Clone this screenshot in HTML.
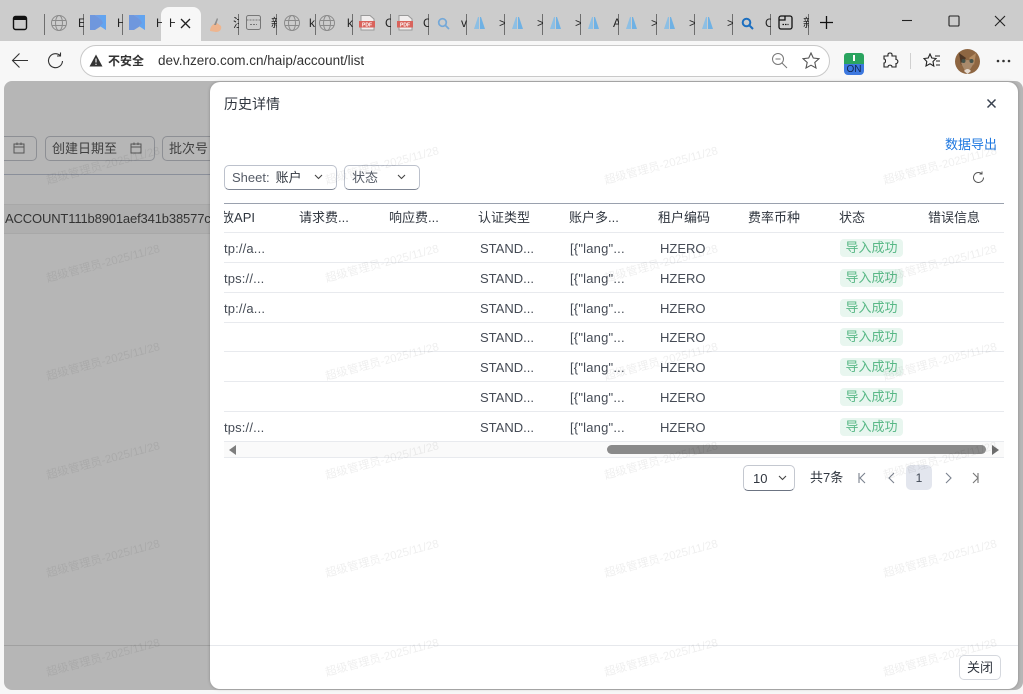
<!DOCTYPE html>
<html lang="zh-CN"><head><meta charset="utf-8"><title>历史详情</title>
<style>
html,body{margin:0;padding:0;width:1023px;height:694px;overflow:hidden;background:#f7f7f7}
body{position:relative;font-family:"Liberation Sans","Noto Sans CJK SC",sans-serif;font-size:13px;color:#30363f}
div,span.a,svg{position:absolute}
.t{white-space:nowrap;line-height:18px}
.sep{top:14px;width:1px;height:21px;background:#6e6e6e}
.cl{top:14px;font-size:12px;width:6px;overflow:hidden;height:18px;line-height:18px;color:#222;white-space:nowrap}
.btn{border:1px solid #bcc1cc;border-bottom-color:#7f8694;border-radius:5px;box-sizing:border-box}
.hl{left:224px;width:780px;height:1px;background:#e8eaee}
.h{top:209px;line-height:18px;white-space:nowrap;color:#30363f}
.c{line-height:18px;white-space:nowrap;color:#454b55;margin-top:1px}
.u{letter-spacing:.15px}
.l{letter-spacing:.2px}
.tag{left:840px;width:63px;height:18px;line-height:18px;background:#e8f6ef;border-radius:4px;color:#58b886;text-align:center}
</style></head><body>
<div style="left:0;top:0;width:1023px;height:41px;background:#cccccc"></div>
<div style="left:161px;top:7px;width:40px;height:34px;background:#f7f7f7;border-radius:8px 8px 0 0"></div>
<svg style="left:12px;top:15px" width="16" height="16" viewBox="0 0 16 16"><rect x="1.500" y="1.500" width="13" height="13" rx="2" fill="none" stroke="#111" stroke-width="1.400"/><rect x="1.500" y="1.500" width="13" height="3.500" fill="#111"/></svg>
<div class="sep" style="left:44px"></div><div class="sep" style="left:83px"></div><div class="sep" style="left:122px"></div><div class="sep" style="left:238px"></div><div class="sep" style="left:276px"></div><div class="sep" style="left:315px"></div><div class="sep" style="left:352px"></div><div class="sep" style="left:390px"></div><div class="sep" style="left:428px"></div><div class="sep" style="left:466px"></div><div class="sep" style="left:504px"></div><div class="sep" style="left:542px"></div><div class="sep" style="left:580px"></div><div class="sep" style="left:618px"></div><div class="sep" style="left:656px"></div><div class="sep" style="left:694px"></div><div class="sep" style="left:732px"></div><div class="sep" style="left:770px"></div><div class="sep" style="left:808px"></div>
<svg style="left:50px;top:14px" width="18" height="18" viewBox="0 0 18 18" fill="none" stroke="#8b8b8b"><circle cx="9" cy="9" r="7.500"/><ellipse cx="9" cy="9" rx="3.500" ry="7.500"/><path d="M2 6.500H16M2 11.500H16"/></svg>
<svg style="left:318px;top:14px" width="18" height="18" viewBox="0 0 18 18" fill="none" stroke="#8b8b8b"><circle cx="9" cy="9" r="7.500"/><ellipse cx="9" cy="9" rx="3.500" ry="7.500"/><path d="M2 6.500H16M2 11.500H16"/></svg>
<svg style="left:283px;top:14px" width="18" height="18" viewBox="0 0 18 18" fill="none" stroke="#8b8b8b"><circle cx="9" cy="9" r="7.500"/><ellipse cx="9" cy="9" rx="3.500" ry="7.500"/><path d="M2 6.500H16M2 11.500H16"/></svg>
<svg style="left:90px;top:15px" width="17" height="16" viewBox="0 0 17 16"><path d="M0 0H5L16 8 5 15H0Z" fill="#6f97dd"/><path d="M5 0H16V15L10 11 15 8Z" fill="#6f9fe8"/><path d="M9 0H16V15L10 11 13 8Z" fill="#62a4f0"/></svg>
<svg style="left:129px;top:15px" width="17" height="16" viewBox="0 0 17 16"><path d="M0 0H5L16 8 5 15H0Z" fill="#6f97dd"/><path d="M5 0H16V15L10 11 15 8Z" fill="#6f9fe8"/><path d="M9 0H16V15L10 11 13 8Z" fill="#62a4f0"/></svg>
<div class="cl" style="left:78px">E</div><div class="cl" style="left:117px">H</div><div class="cl" style="left:156px">H</div><div class="cl" style="left:169px">H</div><div class="cl" style="left:233px">注</div><div class="cl" style="left:271px">新</div><div class="cl" style="left:309px">k</div><div class="cl" style="left:347px">k</div><div class="cl" style="left:385px">C</div><div class="cl" style="left:423px">C</div><div class="cl" style="left:461px">v</div><div class="cl" style="left:499px">&gt;</div><div class="cl" style="left:537px">&gt;</div><div class="cl" style="left:575px">&gt;</div><div class="cl" style="left:613px">A</div><div class="cl" style="left:651px">&gt;</div><div class="cl" style="left:689px">&gt;</div><div class="cl" style="left:727px">&gt;</div><div class="cl" style="left:765px">C</div><div class="cl" style="left:803px">新</div>
<svg style="left:180px;top:18px" width="11" height="11" viewBox="0 0 11 11"><path d="M1 1L10 10M10 1L1 10" stroke="#222" stroke-width="1.300"/></svg>
<svg style="left:209px;top:17px" width="14" height="15" viewBox="0 0 14 15"><path d="M1 14C1 9 5 6 8 6L12 9C13 12 11 15 7 15Z" fill="#eeb58f"/><path d="M5 8L8 1 9 2 7 8Z" fill="#8d8d8d"/></svg>
<svg style="left:246px;top:15px" width="15" height="15" viewBox="0 0 15 15" fill="none" stroke="#777"><rect x=".5" y=".5" width="14" height="14" rx="2"/><path d="M.5 5H14.500M4 9.500H11" stroke-dasharray="2 1"/></svg>
<svg style="left:359px;top:15px" width="16" height="16" viewBox="0 0 16 16"><path d="M2 .5H11L15 4V15H2Z" fill="#f1eeee" stroke="#999"/><rect x="0" y="6" width="16" height="6.500" fill="#d9635c"/><text x="8" y="11.300" font-size="5" font-weight="bold" fill="#fff" text-anchor="middle" font-family="Liberation Sans">PDF</text></svg>
<svg style="left:397px;top:15px" width="16" height="16" viewBox="0 0 16 16"><path d="M2 .5H11L15 4V15H2Z" fill="#f1eeee" stroke="#999"/><rect x="0" y="6" width="16" height="6.500" fill="#d9635c"/><text x="8" y="11.300" font-size="5" font-weight="bold" fill="#fff" text-anchor="middle" font-family="Liberation Sans">PDF</text></svg>
<svg style="left:437px;top:17px" width="13" height="13" viewBox="0 0 13 13" fill="none" stroke="#74a8d8" stroke-width="1.700"><circle cx="5.500" cy="5.500" r="3.800"/><path d="M8.500 8.500L12 12"/></svg>
<svg style="left:474px;top:16px" width="11" height="14" viewBox="0 0 11 14"><path d="M0 13L4 1H5L5 13Z" fill="#8dbfe4"/><path d="M6 1H7L11 13H6Z" fill="#6fb1e4"/></svg>
<svg style="left:512px;top:16px" width="11" height="14" viewBox="0 0 11 14"><path d="M0 13L4 1H5L5 13Z" fill="#8dbfe4"/><path d="M6 1H7L11 13H6Z" fill="#6fb1e4"/></svg>
<svg style="left:550px;top:16px" width="11" height="14" viewBox="0 0 11 14"><path d="M0 13L4 1H5L5 13Z" fill="#8dbfe4"/><path d="M6 1H7L11 13H6Z" fill="#6fb1e4"/></svg>
<svg style="left:588px;top:16px" width="11" height="14" viewBox="0 0 11 14"><path d="M0 13L4 1H5L5 13Z" fill="#8dbfe4"/><path d="M6 1H7L11 13H6Z" fill="#6fb1e4"/></svg>
<svg style="left:626px;top:16px" width="11" height="14" viewBox="0 0 11 14"><path d="M0 13L4 1H5L5 13Z" fill="#8dbfe4"/><path d="M6 1H7L11 13H6Z" fill="#6fb1e4"/></svg>
<svg style="left:664px;top:16px" width="11" height="14" viewBox="0 0 11 14"><path d="M0 13L4 1H5L5 13Z" fill="#8dbfe4"/><path d="M6 1H7L11 13H6Z" fill="#6fb1e4"/></svg>
<svg style="left:702px;top:16px" width="11" height="14" viewBox="0 0 11 14"><path d="M0 13L4 1H5L5 13Z" fill="#8dbfe4"/><path d="M6 1H7L11 13H6Z" fill="#6fb1e4"/></svg>
<svg style="left:741px;top:17px" width="13" height="13" viewBox="0 0 13 13" fill="none" stroke="#1c6fc0" stroke-width="2"><circle cx="5.500" cy="5.500" r="3.800"/><path d="M8.500 8.500L12 12"/></svg>
<svg style="left:778px;top:15px" width="16" height="15" viewBox="0 0 16 15" fill="none" stroke="#111" stroke-width="1.300"><rect x="1" y="1" width="13" height="13" rx="2"/><path d="M1 5H7V1"/><path d="M4.500 9.500H10.500" stroke-dasharray="1.500 1"/></svg>
<svg style="left:819px;top:15px" width="15" height="15" viewBox="0 0 15 15"><path d="M7.500 1V14M1 7.500H14" stroke="#111" stroke-width="1.300"/></svg>
<svg style="left:902px;top:15px" width="122" height="16" viewBox="0 0 122 16" fill="none" stroke="#222" stroke-width="1.100"><path d="M0 5.500H10"/><rect x="47" y="1" width="10" height="10" rx="1"/><path d="M93 1L103 11M103 1L93 11"/></svg>
<div style="left:0;top:41px;width:1023px;height:40px;background:#f7f7f7"></div>
<svg style="left:11px;top:52px" width="18" height="17" viewBox="0 0 18 17" fill="none" stroke="#333" stroke-width="1.100"><path d="M17 8.500H1.500M8.500 1.500L1.500 8.500 8.500 15.500"/></svg>
<svg style="left:47px;top:52px" width="18" height="18" viewBox="0 0 18 18" fill="none" stroke="#333" stroke-width="1.100"><path d="M15.500 9A7 7 0 1 1 13 3.300"/><path d="M13.500 .5V4H10"/></svg>
<div style="left:80px;top:45px;width:750px;height:32px;box-sizing:border-box;background:#fff;border:1px solid #c9c9c9;border-radius:16px"></div>
<svg style="left:89px;top:54px" width="14" height="13" viewBox="0 0 14 13"><path d="M7 .5L13.500 12.500H.5Z" fill="#333"/><path d="M7 4.500V8.500M7 9.700V11" stroke="#fff" stroke-width="1.100"/></svg>
<div class="t" style="left:108px;top:52px;font-size:12px;font-weight:bold;color:#333">不安全</div>
<div class="t" style="left:158px;top:52px;font-size:13.500px;color:#333">dev.hzero.com.cn/haip/account/list</div>
<svg style="left:771px;top:52px" width="17" height="17" viewBox="0 0 17 17" fill="none" stroke="#777" stroke-width="1"><circle cx="7" cy="7" r="5.500"/><path d="M4.500 7H9.500M11 11L16 16"/></svg>
<svg style="left:802px;top:52px" width="18" height="17" viewBox="0 0 18 17" fill="none" stroke="#555" stroke-width="1.100"><path d="M9 1L11.300 6 17 6.700 12.800 10.500 14 16 9 13.200 4 16 5.200 10.500 1 6.700 6.700 6Z"/></svg>
<div style="left:844px;top:53px;width:20px;height:11px;background:#2aa45f;border-radius:3px 3px 0 0"></div>
<div style="left:853px;top:55px;width:2px;height:6px;background:#fff"></div>
<div class="t" style="left:844px;top:64px;width:20px;height:11px;background:#3d78df;border-radius:0 0 4px 4px;font-size:10px;line-height:11px;text-align:center;color:#10264f">ON</div>
<svg style="left:882px;top:52px" width="17" height="17" viewBox="0 0 17 17" fill="none" stroke="#222" stroke-width="1.100"><path d="M6 2.500C6 .5 10 .5 10 2.500V4H14V7.500C16.500 7.500 16.500 11.500 14 11.500V15H10C10 12.500 6 12.500 6 15H2V11C4 11 4 7 2 7V4H6Z"/></svg>
<div style="left:910px;top:53px;width:1px;height:16px;background:#d0d0d0"></div>
<svg style="left:923px;top:53px" width="18" height="16" viewBox="0 0 18 16" fill="none" stroke="#222" stroke-width="1.100"><path d="M7 1L8.800 5 13 5.500 10 8.500 10.800 13 7 10.800 3 13 3.800 8.500 1 5.500 5.200 5Z"/><path d="M12 3H17M13 8H17M13 12H17"/></svg>
<svg style="left:955px;top:49px" width="25" height="25" viewBox="0 0 25 25"><circle cx="12.500" cy="12.500" r="12.500" fill="#8e6642"/><path d="M4 4L11 9 6 16Z" fill="#4d3524"/><path d="M21 4L14 9 19 16Z" fill="#b28a60"/><path d="M6 14Q12.500 8 19 14L13 24H11Z" fill="#a98a6c"/><circle cx="8.500" cy="12" r="2" fill="#45524a"/><circle cx="16.500" cy="12" r="2" fill="#45524a"/><path d="M9 22Q12.500 18 16 22L12.500 25Z" fill="#e6dbd0"/></svg>
<svg style="left:996px;top:59px" width="15" height="4" viewBox="0 0 15 4" fill="#333"><circle cx="2" cy="2" r="1.300"/><circle cx="7.500" cy="2" r="1.300"/><circle cx="13" cy="2" r="1.300"/></svg>
<div style="left:4px;top:81px;width:1019px;height:609px;background:#b6b6b6;border-radius:8px 8px 8px 8px;overflow:hidden">
<div class="btn" style="left:-30px;top:55px;width:63px;height:25px;border-color:#8d8f94"></div>
<div class="btn t" style="left:41px;top:55px;width:110px;height:25px;line-height:23px;padding-left:6px;border-color:#8d8f94;color:#3f3f3f">创建日期至</div>
<div class="btn t" style="left:158px;top:55px;width:60px;height:25px;line-height:23px;padding-left:6px;border-color:#8d8f94;color:#3f3f3f">批次号</div>
<svg style="left:9px;top:61px" width="12" height="12" viewBox="0 0 12 12" fill="none" stroke="#555"><rect x="1" y="2" width="10" height="9"/><path d="M1 5H11M4 .5V3M8 .5V3"/></svg>
<svg style="left:126px;top:61px" width="12" height="12" viewBox="0 0 12 12" fill="none" stroke="#555"><rect x="1" y="2" width="10" height="9"/><path d="M1 5H11M4 .5V3M8 .5V3"/></svg>
<div style="left:0;top:93px;width:210px;height:1px;background:#8a8f9a"></div>
<div style="left:0;top:123px;width:210px;height:30px;background:#afafaf;border-top:1px solid #a8a8a8;border-bottom:1px solid #a8a8a8;box-sizing:border-box"></div>
<div class="t" style="left:1px;top:129px;width:205px;overflow:hidden;font-size:13px;letter-spacing:-.15px;color:#333">ACCOUNT111b8901aef341b38577c</div>
<div style="left:0;top:564px;width:210px;height:1px;background:#a0a0a0"></div>
</div>
<div style="left:210px;top:82px;width:808px;height:607px;background:#fff;border-radius:10px;box-shadow:0 0 3px rgba(0,0,0,.25)"></div>
<div class="t" style="left:224px;top:95px;font-size:14px;color:#30363f">历史详情</div>
<svg style="left:986px;top:98px" width="11" height="11" viewBox="0 0 11 11"><path d="M1.500 1.500L9.500 9.500M9.500 1.500L1.500 9.500" stroke="#3a4250" stroke-width="1.500"/></svg>
<div class="t" style="left:945px;top:136px;color:#1f78e0">数据导出</div>
<div class="btn t" style="left:224px;top:165px;width:113px;height:25px;line-height:23px;padding-left:7px"><span style="color:#555b66">Sheet:</span><span style="margin-left:6px">账户</span></div>
<svg style="left:314px;top:174px" width="9" height="6" viewBox="0 0 9 6" fill="none" stroke="#444" stroke-width="1.100"><path d="M1 1L4.500 4.500 8 1"/></svg>
<div class="btn t" style="left:344px;top:165px;width:76px;height:25px;line-height:23px;padding-left:7px;color:#555b66">状态</div>
<svg style="left:397px;top:174px" width="9" height="6" viewBox="0 0 9 6" fill="none" stroke="#444" stroke-width="1.100"><path d="M1 1L4.500 4.500 8 1"/></svg>
<svg style="left:972px;top:171px" width="13" height="13" viewBox="0 0 13 13" fill="none" stroke="#555" stroke-width="1"><path d="M11.500 6.500A5 5 0 1 1 9.500 2.500"/><path d="M10 .5V3H7.500"/></svg>
<div class="hl" style="top:203px;background:#9aa1ae"></div>
<div class="hl" style="top:232px"></div><div class="hl" style="top:262px"></div><div class="hl" style="top:292px"></div><div class="hl" style="top:322px"></div><div class="hl" style="top:351px"></div><div class="hl" style="top:381px"></div><div class="hl" style="top:411px"></div><div class="hl" style="top:441px"></div><div class="hl" style="top:457px"></div>
<div class="h" style="left:224px;width:31px;overflow:hidden;direction:rtl">放API</div>
<div class="h" style="left:299px">请求费...</div><div class="h" style="left:389px">响应费...</div><div class="h" style="left:478px">认证类型</div><div class="h" style="left:569px">账户多...</div><div class="h" style="left:658px">租户编码</div><div class="h" style="left:748px">费率币种</div><div class="h" style="left:839px">状态</div><div class="h" style="left:928px">错误信息</div>
<div class="c u" style="left:224px;top:239px">tp://a...</div><div class="c u" style="left:224px;top:269px">tps://...</div><div class="c u" style="left:224px;top:299px">tp://a...</div><div class="c u" style="left:224px;top:418px">tps://...</div>
<div class="c" style="left:480px;top:239px">STAND...</div><div class="c" style="left:480px;top:269px">STAND...</div><div class="c" style="left:480px;top:299px">STAND...</div><div class="c" style="left:480px;top:328px">STAND...</div><div class="c" style="left:480px;top:358px">STAND...</div><div class="c" style="left:480px;top:388px">STAND...</div><div class="c" style="left:480px;top:418px">STAND...</div>
<div class="c l" style="left:570px;top:239px">[{"lang"...</div><div class="c l" style="left:570px;top:269px">[{"lang"...</div><div class="c l" style="left:570px;top:299px">[{"lang"...</div><div class="c l" style="left:570px;top:328px">[{"lang"...</div><div class="c l" style="left:570px;top:358px">[{"lang"...</div><div class="c l" style="left:570px;top:388px">[{"lang"...</div><div class="c l" style="left:570px;top:418px">[{"lang"...</div>
<div class="c" style="left:660px;top:239px">HZERO</div><div class="c" style="left:660px;top:269px">HZERO</div><div class="c" style="left:660px;top:299px">HZERO</div><div class="c" style="left:660px;top:328px">HZERO</div><div class="c" style="left:660px;top:358px">HZERO</div><div class="c" style="left:660px;top:388px">HZERO</div><div class="c" style="left:660px;top:418px">HZERO</div>
<div class="tag" style="top:239px">导入成功</div><div class="tag" style="top:269px">导入成功</div><div class="tag" style="top:299px">导入成功</div><div class="tag" style="top:328px">导入成功</div><div class="tag" style="top:358px">导入成功</div><div class="tag" style="top:388px">导入成功</div><div class="tag" style="top:418px">导入成功</div>
<div style="left:224px;top:442px;width:780px;height:15px;background:#fafafa"></div>
<div style="left:607px;top:445px;width:379px;height:9px;background:#8a8a8a;border-radius:5px"></div>
<svg style="left:229px;top:445px" width="8" height="10" viewBox="0 0 8 10"><path d="M7 0V10L0 5Z" fill="#7d7d7d"/></svg>
<svg style="left:992px;top:445px" width="8" height="10" viewBox="0 0 8 10"><path d="M0 0V10L7 5Z" fill="#6d6d6d"/></svg>
<div class="btn t" style="left:743px;top:465px;width:52px;height:26px;line-height:26px;padding-left:9px;border-color:#c4c8d0;border-bottom-color:#6c7482">10</div>
<svg style="left:778px;top:475px" width="9" height="6" viewBox="0 0 9 6" fill="none" stroke="#444" stroke-width="1.100"><path d="M1 1L4.500 4.500 8 1"/></svg>
<div class="t" style="left:810px;top:469px">共7条</div>
<div style="left:906px;top:465px;width:26px;height:25px;background:#e3e6ee;border-radius:5px"></div>
<div class="t" style="left:906px;top:469px;width:26px;text-align:center;font-size:12px;color:#3f4754">1</div>
<svg style="left:858px;top:472px" width="122" height="12" viewBox="0 0 122 12" fill="none" stroke="#7b828e" stroke-width="1.100"><path d="M1 1V11M7 1L2 6 7 11"/><path d="M36 1L31 6 36 11"/><path d="M88 1L93 6 88 11"/><path d="M115 1L120 6 115 11M120 1V11" stroke="#777"/></svg>
<div style="left:210px;top:645px;width:808px;height:1px;background:#e6e8ec"></div>
<div class="btn t" style="left:959px;top:655px;width:42px;height:25px;line-height:23px;text-align:center;border-color:#d5d8de">关闭</div>
<svg style="left:0;top:0;pointer-events:none" width="1023" height="694" font-size="11.400" fill="rgba(0,0,0,.065)" text-anchor="middle" font-family="Liberation Sans, Noto Sans CJK SC, sans-serif">
<text transform="translate(104 169) rotate(-15)">超级管理员-2025/11/28</text><text transform="translate(383 169) rotate(-15)">超级管理员-2025/11/28</text><text transform="translate(662 169) rotate(-15)">超级管理员-2025/11/28</text><text transform="translate(941 169) rotate(-15)">超级管理员-2025/11/28</text>
<text transform="translate(104 267) rotate(-15)">超级管理员-2025/11/28</text><text transform="translate(383 267) rotate(-15)">超级管理员-2025/11/28</text><text transform="translate(662 267) rotate(-15)">超级管理员-2025/11/28</text><text transform="translate(941 267) rotate(-15)">超级管理员-2025/11/28</text>
<text transform="translate(104 365) rotate(-15)">超级管理员-2025/11/28</text><text transform="translate(383 365) rotate(-15)">超级管理员-2025/11/28</text><text transform="translate(662 365) rotate(-15)">超级管理员-2025/11/28</text><text transform="translate(941 365) rotate(-15)">超级管理员-2025/11/28</text>
<text transform="translate(104 464) rotate(-15)">超级管理员-2025/11/28</text><text transform="translate(383 464) rotate(-15)">超级管理员-2025/11/28</text><text transform="translate(662 464) rotate(-15)">超级管理员-2025/11/28</text><text transform="translate(941 464) rotate(-15)">超级管理员-2025/11/28</text>
<text transform="translate(104 562) rotate(-15)">超级管理员-2025/11/28</text><text transform="translate(383 562) rotate(-15)">超级管理员-2025/11/28</text><text transform="translate(662 562) rotate(-15)">超级管理员-2025/11/28</text><text transform="translate(941 562) rotate(-15)">超级管理员-2025/11/28</text>
<text transform="translate(104 661) rotate(-15)">超级管理员-2025/11/28</text><text transform="translate(383 661) rotate(-15)">超级管理员-2025/11/28</text><text transform="translate(662 661) rotate(-15)">超级管理员-2025/11/28</text><text transform="translate(941 661) rotate(-15)">超级管理员-2025/11/28</text>
</svg>
</body></html>
